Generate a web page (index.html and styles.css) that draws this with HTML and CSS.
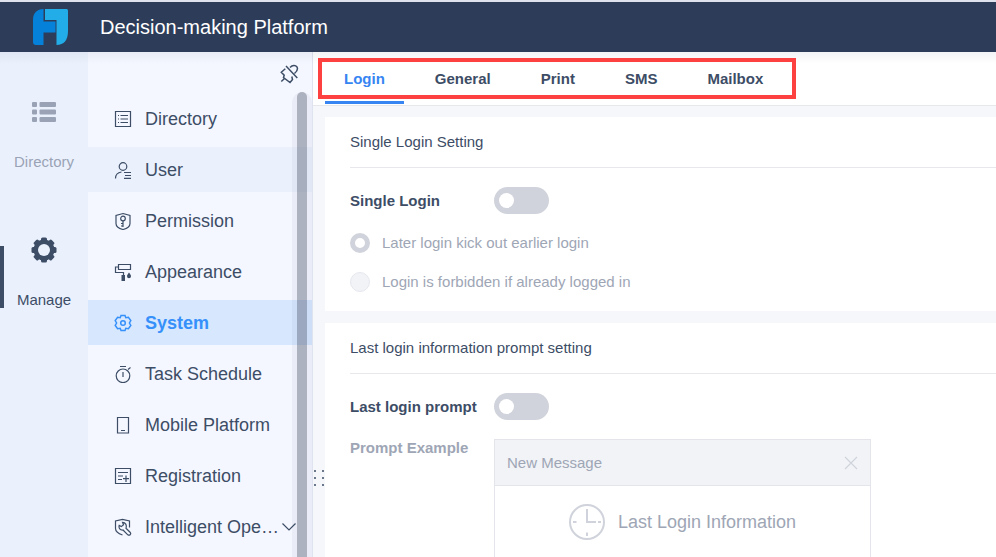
FILE: index.html
```html
<!DOCTYPE html>
<html lang="en">
  <head>
    <meta charset="UTF-8" />
    <meta name="viewport" content="width=device-width, initial-scale=1.0" />
    <title>Decision-making Platform</title>
    <link rel="stylesheet" href="styles.css">
  </head>
  <body>
    <header class="topbar">
      <svg class="logo" width="36" height="36" viewBox="0 0 36 36">
        <path fill="#0681da" d="M0 11C0 4 4 0 10.500 0V12.500H22.500V23.500H10.500V36H3C1 36 0 35 0 33Z" />
        <path fill="#22ade8" d="M12 0H33C34.500 0 35 0.500 35 2V22C35 31 31 36 23.500 36V11H12Z" />
      </svg>
      <h1>Decision-making Platform</h1>
    </header>
    <div class="layout">
      <nav class="rail">
        <a href="#" class="rail-item">
          <svg width="26" height="26" viewBox="0 0 26 26" fill="currentColor">
            <rect x="1" y="3" width="5" height="5" rx="1" />
            <rect x="8.500" y="3" width="16.500" height="5" rx="1" />
            <rect x="1" y="10.500" width="5" height="5" rx="1" />
            <rect x="8.500" y="10.500" width="16.500" height="5" rx="1" />
            <rect x="1" y="18" width="5" height="5" rx="1" />
            <rect x="8.500" y="18" width="16.500" height="5" rx="1" />
          </svg>
          <span>Directory</span>
        </a>
        <a href="#" class="rail-item current">
          <svg width="26" height="26" viewBox="0 0 26 26">
            <g fill="currentColor">
              <rect x="10" y="0.500" width="6" height="25" rx="1.500" />
              <rect x="10" y="0.500" width="6" height="25" rx="1.500" transform="rotate(45 13 13)" />
              <rect x="10" y="0.500" width="6" height="25" rx="1.500" transform="rotate(90 13 13)" />
              <rect x="10" y="0.500" width="6" height="25" rx="1.500" transform="rotate(135 13 13)" />
              <circle cx="13" cy="13" r="10.500" />
            </g>
            <circle cx="13" cy="13" r="6" fill="#eaf1fd" />
          </svg>
          <span>Manage</span>
        </a>
      </nav>
      <aside class="sidebar">
        <button class="pin" type="button" aria-label="Unpin">
          <svg width="20" height="20" viewBox="0 0 20 20" class="line thick">
            <path d="M7 2L18.300 14M11 3.500C13.500 1 16.500 1 18 3C19 5 18 7.500 15.500 9.500M6.300 4.700L2.300 8.200L5.200 11.300L4.500 13.500L11 18.500L13.500 15.500L12.800 12.500M6 14L2.300 17.500" />
          </svg>
        </button>
        <nav class="menu">
          <a href="#" class="menu-item">
            <svg width="18" height="18" viewBox="0 0 18 18" class="line">
              <path d="M1.500 1.500H16.500V16.500H1.500ZM6.500 5.500H14M6.500 9H14M6.500 12.500H14M4 5.500H5M4 9H5M4 12.500H5" />
            </svg>
            <span>Directory</span>
          </a>
          <a href="#" class="menu-item hovered">
            <svg width="18" height="18" viewBox="0 0 18 18" class="line">
              <circle cx="9" cy="5.500" r="3.800" />
              <path d="M1.500 17.500C1.500 13.500 3.500 11.500 7.500 11M10 11.500H17M11 14.500H17M10 17.300H17" />
            </svg>
            <span>User</span>
          </a>
          <a href="#" class="menu-item">
            <svg width="18" height="18" viewBox="0 0 18 18" class="line">
              <path d="M9 1.500L16 3.500V11.500C16 14.500 13 16.500 9 17.500C5 16.500 2 14.500 2 11.500V3.500Z" />
              <circle cx="9" cy="6.500" r="2.300" />
              <path d="M9 9V15M9 11.500H7M9 14H7" />
            </svg>
            <span>Permission</span>
          </a>
          <a href="#" class="menu-item">
            <svg width="18" height="18" viewBox="0 0 18 18" class="line">
              <path d="M4.500 1.500H16.500V6.500H4.500ZM4.500 4H1.500V9.500H9.500V12" />
              <path fill="currentColor" stroke="none" d="M7.500 12H11V18H7.500ZM15 9.500C16 11 17 12 17 13.200A2 2 0 0 1 13 13.200C13 12 14 11 15 9.500Z" />
            </svg>
            <span>Appearance</span>
          </a>
          <a href="#" class="menu-item active">
            <svg width="18" height="18" viewBox="0 0 18 18" class="line thick">
              <path d="M7 1.500H11L11.800 3.700L14.400 3.300L16.800 6.500L15.400 9L16.800 11.500L14.400 14.700L11.800 14.300L11 16.500H7L6.200 14.300L3.600 14.700L1.200 11.500L2.600 9L1.200 6.500L3.600 3.300L6.200 3.700Z" />
              <circle cx="9" cy="9" r="2.300" />
            </svg>
            <span>System</span>
          </a>
          <a href="#" class="menu-item">
            <svg width="18" height="18" viewBox="0 0 18 18" class="line">
              <circle cx="9" cy="10.800" r="6.800" />
              <path d="M6 1.500H12M9 7V12M14 4.500L16.500 2.500" />
            </svg>
            <span>Task Schedule</span>
          </a>
          <a href="#" class="menu-item">
            <svg width="18" height="18" viewBox="0 0 18 18" class="line">
              <path d="M3.500 1.500H14.500V17H3.500ZM7 14.500H11" />
            </svg>
            <span>Mobile Platform</span>
          </a>
          <a href="#" class="menu-item">
            <svg width="18" height="18" viewBox="0 0 18 18" class="line">
              <path d="M1.500 1.500H16.500V16.500H1.500ZM4 5.500H14M4 9H9M4 12.500H8M12 8.500V15M9 11.700H15" />
            </svg>
            <span>Registration</span>
          </a>
          <a href="#" class="menu-item">
            <svg width="18" height="18" viewBox="0 0 18 18" class="line">
              <path d="M8.500 17C4 15.500 1.500 14 1.500 10.500V3L8.500 1.300L15.500 3V9.500" />
              <path d="M8.500 4.300L9.500 6.800L7.300 8.600L5.200 7.500C4.500 10 6 12.300 9 12L13.800 16.800C15.500 18 17.500 16.200 16.300 14.500L12 10.300C13 7 11.500 4.500 8.500 4.300Z" />
            </svg>
            <span>Intelligent Ope…</span>
            <svg class="chevron line" width="14" height="10" viewBox="0 0 14 10">
              <path d="M0.500 1.500L7 8L13.500 1.500" />
            </svg>
          </a>
        </nav>
        <div class="scroll-track"><div class="scroll-thumb"></div></div>
      </aside>
      <main class="content">
        <div class="tabs">
          <button type="button" class="tab selected">Login</button>
          <button type="button" class="tab">General</button>
          <button type="button" class="tab">Print</button>
          <button type="button" class="tab">SMS</button>
          <button type="button" class="tab">Mailbox</button>
          <div class="highlight"></div>
        </div>
        <div class="panels">
          <section class="card">
            <h2>Single Login Setting</h2>
            <div class="card-body">
              <div class="row">
                <label class="row-label" for="single-login">Single Login</label>
                <input class="toggle" type="checkbox" id="single-login" />
              </div>
              <label class="option">
                <input type="radio" name="login-mode" checked disabled />
                Later login kick out earlier login
              </label>
              <label class="option">
                <input type="radio" name="login-mode" disabled />
                Login is forbidden if already logged in
              </label>
            </div>
          </section>
          <section class="card">
            <h2>Last login information prompt setting</h2>
            <div class="card-body">
              <div class="row">
                <label class="row-label" for="last-login">Last login prompt</label>
                <input class="toggle" type="checkbox" id="last-login" />
              </div>
              <div class="row top">
                <span class="row-label muted">Prompt Example</span>
                <div class="message">
                  <div class="message-head">
                    <span>New Message</span>
                    <button class="close" type="button" aria-label="Close">
                      <svg width="14" height="14" viewBox="0 0 14 14" class="line">
                        <path d="M1 1L13 13M13 1L1 13" />
                      </svg>
                    </button>
                  </div>
                  <div class="message-body">
                    <svg width="36" height="36" viewBox="0 0 36 36" fill="none" stroke="#d0d3db" stroke-width="2">
                      <circle cx="18" cy="18" r="17" />
                      <path d="M18 5V18H27M4 18H7.500M29 18H32M18 28.500V32" />
                    </svg>
                    <span>Last Login Information</span>
                  </div>
                </div>
              </div>
            </div>
          </section>
        </div>
        <div class="grip"><i></i><i></i><i></i><i></i><i></i><i></i></div>
      </main>
    </div>
  </body>
</html>
```
FILE: styles.css
```css
* {
  margin: 0;
  padding: 0;
  box-sizing: border-box;
}
body {
  height: 100vh;
  display: flex;
  flex-direction: column;
  overflow: hidden;
  font-family: "Liberation Sans", Arial, sans-serif;
  font-size: 15px;
  line-height: 18px;
  color: #3d4d66;
}
a {
  color: inherit;
  text-decoration: none;
}
button {
  border: none;
  background: none;
  font: inherit;
  color: inherit;
  cursor: pointer;
}
svg {
  display: block;
  flex: none;
}
.line {
  fill: none;
  stroke: currentColor;
  stroke-width: 1.2;
}
.thick {
  stroke-width: 1.5;
}

/* header */
.topbar {
  flex: none;
  display: flex;
  align-items: center;
  gap: 31px;
  height: 52px;
  padding-left: 33px;
  border-top: 2px solid #dde2ec;
  background: #2d3d59;
  color: #fff;
}
.topbar h1 {
  font-size: 20px;
  line-height: 24px;
  font-weight: normal;
}
.layout {
  position: relative;
  flex: 1;
  min-height: 0;
  display: flex;
}
/* header shadow */
.layout::before {
  content: "";
  position: absolute;
  z-index: 1;
  top: 0;
  left: 0;
  right: 0;
  height: 12px;
  background: linear-gradient(rgba(45, 61, 89, 0.06), rgba(45, 61, 89, 0));
  pointer-events: none;
}

/* left rail */
.rail {
  flex: none;
  width: 88px;
  padding-top: 18px;
  background: #eaf1fd;
}
.rail-item {
  position: relative;
  display: flex;
  flex-direction: column;
  align-items: center;
  gap: 28px;
  height: 138px;
  padding-top: 29px;
  color: #9aa3b5;
}
.rail-item.current {
  color: #3d4d66;
}
.rail-item.current::before {
  content: "";
  position: absolute;
  left: 0;
  top: 38px;
  width: 4px;
  height: 62px;
  background: #3d4d66;
}

/* sidebar */
.sidebar {
  position: relative;
  flex: none;
  width: 225px;
  border-right: 1px solid #dfe3f0;
  background: #f4f7ff;
}
.pin {
  display: block;
  margin: 12px 13px 12px auto;
}
.menu {
  display: flex;
  flex-direction: column;
  gap: 6px;
}
.menu-item {
  display: flex;
  align-items: center;
  gap: 13px;
  height: 45px;
  padding: 0 16px 0 26px;
  font-size: 18px;
  line-height: 22px;
  white-space: nowrap;
}
.menu-item.hovered {
  background: #eaf1fd;
}
.menu-item.active {
  background: #d6e7fe;
  color: #3590fa;
  font-weight: bold;
}
.chevron {
  margin-left: -10px;
}
.scroll-track {
  position: absolute;
  top: 40px;
  bottom: 0;
  right: 0;
  width: 20px;
  padding: 0 5px;
  border-radius: 10px 10px 0 0;
  background: rgba(61, 50, 90, 0.05);
}
.scroll-thumb {
  height: 100%;
  border-radius: 5px 5px 0 0;
  background: rgba(61, 70, 90, 0.35);
}

/* content */
.content {
  position: relative;
  flex: 1;
  min-width: 0;
  display: flex;
  flex-direction: column;
  background: #f6f7fa;
}
.tabs {
  position: relative;
  flex: none;
  display: flex;
  gap: 12px;
  height: 54px;
  padding-left: 12px;
  border-bottom: 1px solid #e6e8ec;
  background: #fff;
}
.tab {
  height: 52px;
  padding: 5px 19px 0;
  border-bottom: 3px solid transparent;
  font-weight: bold;
}
.tab.selected {
  border-color: #3685f2;
  color: #3685f2;
}
.highlight {
  position: absolute;
  z-index: 2;
  top: 6px;
  left: 5px;
  width: 478px;
  height: 41px;
  border: 4px solid #fd4141;
  pointer-events: none;
}
.panels {
  display: flex;
  flex-direction: column;
  gap: 12px;
  flex: 1;
  min-height: 0;
  padding: 11px 0 0 12px;
}
.card {
  flex: none;
  padding-left: 25px;
  background: #fff;
}
.card h2 {
  border-bottom: 1px solid #e6e8ec;
  font-size: 15px;
  line-height: 50px;
  font-weight: normal;
}
.card-body {
  display: flex;
  flex-direction: column;
  gap: 19px;
  padding: 19px 0;
}
.row {
  display: flex;
  align-items: center;
}
.row.top {
  align-items: flex-start;
}
.row-label {
  flex: none;
  width: 144px;
  font-weight: bold;
}
.muted {
  color: #9ea6b5;
}
.toggle {
  appearance: none;
  width: 55px;
  height: 27px;
  padding: 6px 5px;
  border-radius: 14px;
  background: #d0d3db;
}
.toggle::before {
  content: "";
  display: block;
  width: 15px;
  height: 15px;
  border-radius: 50%;
  background: #fff;
}
.toggle:checked {
  background: #3685f2;
}
.toggle:checked::before {
  margin-left: auto;
}
.option {
  display: flex;
  align-items: center;
  gap: 12px;
  height: 20px;
  color: #9ea6b5;
}
.option input {
  appearance: none;
  width: 20px;
  height: 20px;
  border: 1px solid #e6e8ee;
  border-radius: 50%;
  background: #f2f3f7;
}
.option input:checked {
  border: 5px solid #d0d3db;
  background: #fff;
}

/* message preview */
.message {
  flex: 0 1 377px;
  border: 1px solid #e3e5eb;
  color: #9ea6b5;
}
.message-head {
  display: flex;
  align-items: center;
  justify-content: space-between;
  height: 46px;
  padding: 0 12px;
  border-bottom: 1px solid #e3e5eb;
  background: #f2f3f7;
}
.close {
  color: #d0d3db;
}
.message-body {
  display: flex;
  align-items: center;
  justify-content: center;
  gap: 13px;
  height: 72px;
  font-size: 18px;
}

/* resize handle over the edge of the panels */
.grip {
  position: absolute;
  top: 418px;
  left: 1px;
  display: grid;
  grid-template-columns: 2px 2px;
  gap: 5px 6px;
}
.grip i {
  width: 2px;
  height: 2px;
  border-radius: 1px;
  background: #3d4d66;
}
```
